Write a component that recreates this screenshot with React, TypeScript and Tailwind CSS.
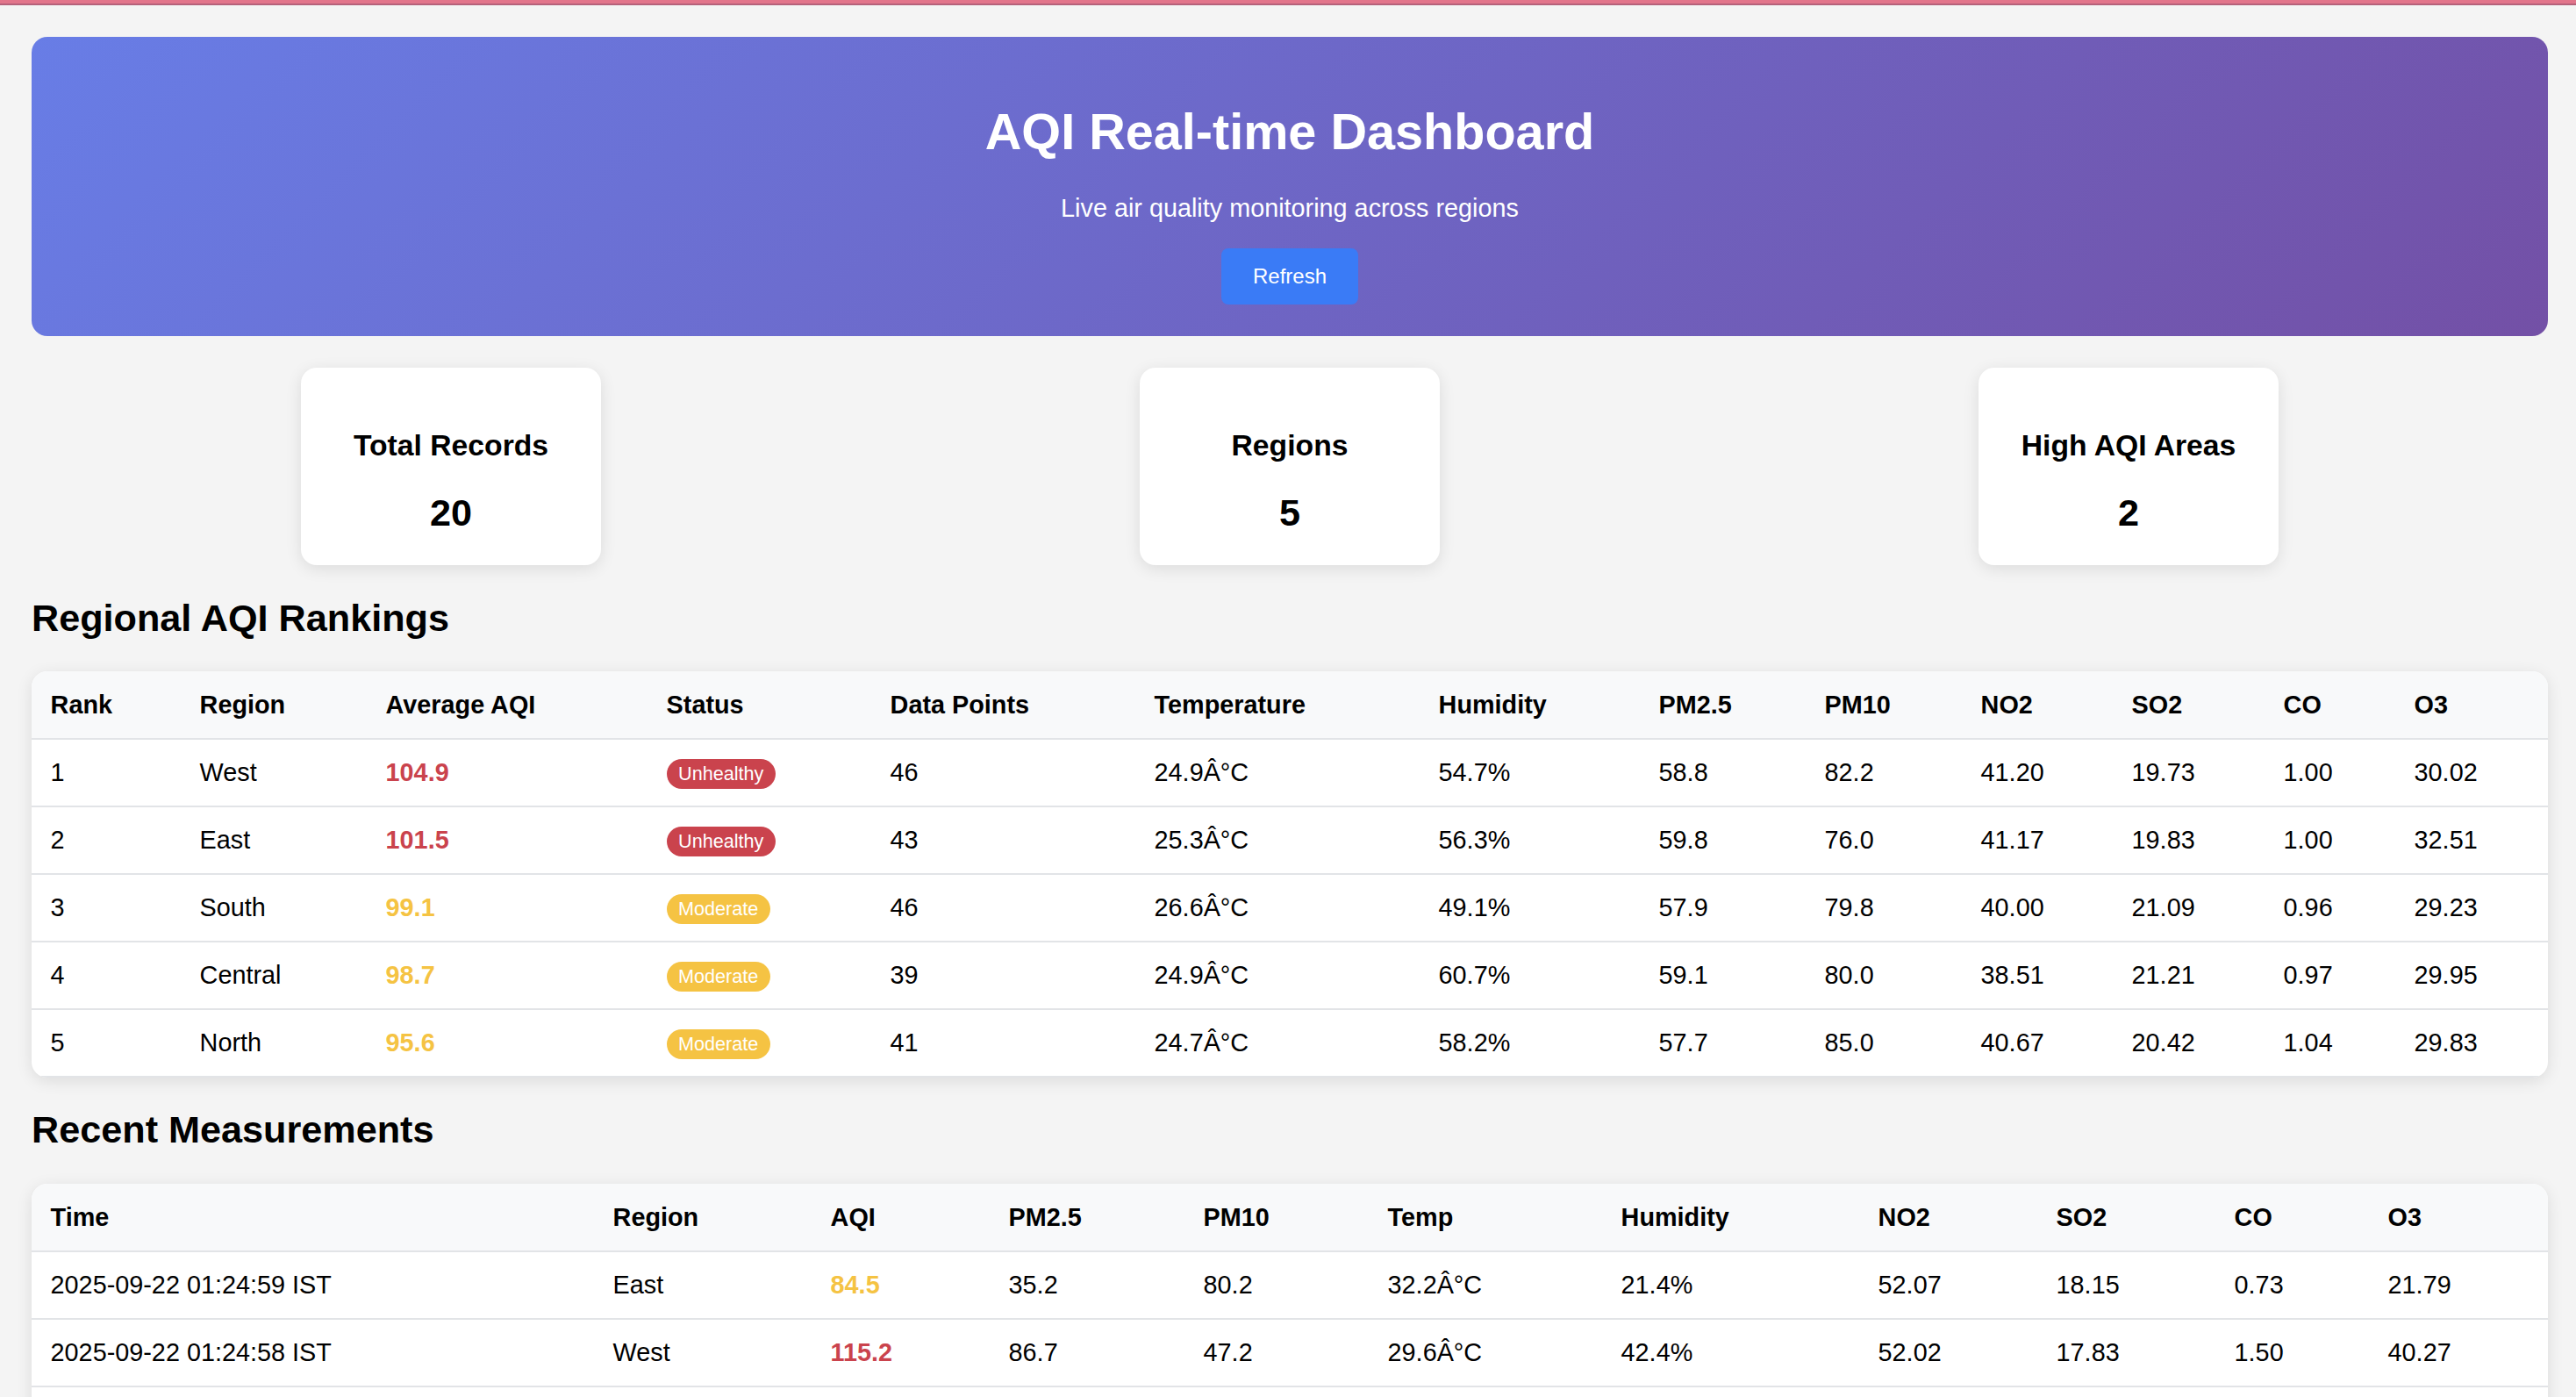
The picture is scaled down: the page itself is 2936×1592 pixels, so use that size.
import React from "react";

type Ranking = {
  rank: number;
  region: string;
  aqi: string;
  status: "Unhealthy" | "Moderate";
  points: number;
  temp: string;
  humidity: string;
  pm25: string;
  pm10: string;
  no2: string;
  so2: string;
  co: string;
  o3: string;
};

const rankings: Ranking[] = [
  { rank: 1, region: "West", aqi: "104.9", status: "Unhealthy", points: 46, temp: "24.9Â°C", humidity: "54.7%", pm25: "58.8", pm10: "82.2", no2: "41.20", so2: "19.73", co: "1.00", o3: "30.02" },
  { rank: 2, region: "East", aqi: "101.5", status: "Unhealthy", points: 43, temp: "25.3Â°C", humidity: "56.3%", pm25: "59.8", pm10: "76.0", no2: "41.17", so2: "19.83", co: "1.00", o3: "32.51" },
  { rank: 3, region: "South", aqi: "99.1", status: "Moderate", points: 46, temp: "26.6Â°C", humidity: "49.1%", pm25: "57.9", pm10: "79.8", no2: "40.00", so2: "21.09", co: "0.96", o3: "29.23" },
  { rank: 4, region: "Central", aqi: "98.7", status: "Moderate", points: 39, temp: "24.9Â°C", humidity: "60.7%", pm25: "59.1", pm10: "80.0", no2: "38.51", so2: "21.21", co: "0.97", o3: "29.95" },
  { rank: 5, region: "North", aqi: "95.6", status: "Moderate", points: 41, temp: "24.7Â°C", humidity: "58.2%", pm25: "57.7", pm10: "85.0", no2: "40.67", so2: "20.42", co: "1.04", o3: "29.83" },
];

const recent = [
  ["2025-09-22 01:24:59 IST", "East", "84.5", "35.2", "80.2", "32.2Â°C", "21.4%", "52.07", "18.15", "0.73", "21.79"],
  ["2025-09-22 01:24:58 IST", "West", "115.2", "86.7", "47.2", "29.6Â°C", "42.4%", "52.02", "17.83", "1.50", "40.27"],
  ["2025-09-22 01:24:57 IST", "North", "97.3", "61.4", "88.1", "23.9Â°C", "63.0%", "39.85", "20.11", "1.02", "28.64"],
];

const rankCols = ["w-[170px]", "w-[212px]", "w-[320px]", "w-[255px]", "w-[301px]", "w-[324px]", "w-[251px]", "w-[189px]", "w-[178px]", "w-[172px]", "w-[173px]", "w-[149px]", "w-[174px]"];
const recentCols = ["w-[641px]", "w-[248px]", "w-[203px]", "w-[222px]", "w-[210px]", "w-[266px]", "w-[293px]", "w-[203px]", "w-[203px]", "w-[175px]", "w-[204px]"];

const thClass =
  "h-[77px] border-b-2 border-[#e2e4e7] bg-[#f8f9fa] px-[21.6px] py-0 text-left align-middle text-[28.8px] font-bold leading-[33px]";
const tdClass =
  "h-[77px] border-b-2 border-[#e2e4e7] px-[21.6px] py-0 text-left align-middle text-[28.8px] leading-[33px]";

function aqiColor(value: string) {
  return parseFloat(value) > 100 ? "text-[#ca434d]" : "text-[#f5c343]";
}

function StatusBadge({ status }: { status: string }) {
  const bg = status === "Unhealthy" ? "bg-[#ca434d]" : "bg-[#f5c343]";
  return (
    <span className={`inline-block rounded-full px-[13.5px] py-[5px] text-[21.6px] leading-[24px] text-white ${bg}`}>
      {status}
    </span>
  );
}

function StatCard({ label, value }: { label: string; value: string }) {
  return (
    <div className="flex w-[342px] flex-col items-center rounded-[18px] bg-white pb-[36px] pt-[69px] shadow-[0_4px_18px_rgba(0,0,0,0.1)]">
      <div className="text-[33.7px] font-bold leading-[38px]">{label}</div>
      <div className="mt-[34px] text-[43.2px] font-bold leading-[48px]">{value}</div>
    </div>
  );
}

export default function App() {
  return (
    <div className="min-h-screen w-full bg-[#f4f4f4] font-['Liberation_Sans',Arial,sans-serif] text-black">
      <div className="h-[4px] bg-[#e2758b]" />
      <div className="h-[2px] bg-[#b5617a]" />

      <div className="pl-[36px] pr-[32px] pt-[36px]">
        <header className="rounded-[18px] bg-[linear-gradient(135deg,#687de6_0%,#7350a6_100%)] p-[36px] text-center text-white">
          <h1 className="mb-[39px] mt-[40px] text-[57.6px] font-bold leading-[64px]">AQI Real-time Dashboard</h1>
          <p className="mb-[30px] text-[28.8px] leading-[32px]">Live air quality monitoring across regions</p>
          <button
            type="button"
            className="h-[64px] rounded-[8px] bg-[#3a7bf6] px-[36px] text-[24px] leading-[28px] text-white"
          >
            Refresh
          </button>
        </header>

        <div className="mt-[36px] flex justify-around">
          <StatCard label="Total Records" value="20" />
          <StatCard label="Regions" value="5" />
          <StatCard label="High AQI Areas" value="2" />
        </div>

        <h2 className="mb-[37px] mt-[36px] text-[43.2px] font-bold leading-[48px]">Regional AQI Rankings</h2>
        <div className="overflow-hidden rounded-[18px] bg-white shadow-[0_4px_18px_rgba(0,0,0,0.1)]">
          <table className="w-full table-fixed border-collapse">
            <colgroup>
              {rankCols.map((c, i) => (
                <col key={i} className={c} />
              ))}
            </colgroup>
            <thead>
              <tr>
                {["Rank", "Region", "Average AQI", "Status", "Data Points", "Temperature", "Humidity", "PM2.5", "PM10", "NO2", "SO2", "CO", "O3"].map((h) => (
                  <th key={h} className={thClass}>
                    {h}
                  </th>
                ))}
              </tr>
            </thead>
            <tbody>
              {rankings.map((r) => (
                <tr key={r.rank}>
                  <td className={tdClass}>{r.rank}</td>
                  <td className={tdClass}>{r.region}</td>
                  <td className={`${tdClass} font-bold ${aqiColor(r.aqi)}`}>{r.aqi}</td>
                  <td className={tdClass}>
                    <StatusBadge status={r.status} />
                  </td>
                  <td className={tdClass}>{r.points}</td>
                  <td className={tdClass}>{r.temp}</td>
                  <td className={tdClass}>{r.humidity}</td>
                  <td className={tdClass}>{r.pm25}</td>
                  <td className={tdClass}>{r.pm10}</td>
                  <td className={tdClass}>{r.no2}</td>
                  <td className={tdClass}>{r.so2}</td>
                  <td className={tdClass}>{r.co}</td>
                  <td className={tdClass}>{r.o3}</td>
                </tr>
              ))}
            </tbody>
          </table>
        </div>

        <h2 className="mb-[38px] mt-[35px] text-[43.2px] font-bold leading-[48px]">Recent Measurements</h2>
        <div className="mb-[36px] overflow-hidden rounded-[18px] bg-white shadow-[0_4px_18px_rgba(0,0,0,0.1)]">
          <table className="w-full table-fixed border-collapse">
            <colgroup>
              {recentCols.map((c, i) => (
                <col key={i} className={c} />
              ))}
            </colgroup>
            <thead>
              <tr>
                {["Time", "Region", "AQI", "PM2.5", "PM10", "Temp", "Humidity", "NO2", "SO2", "CO", "O3"].map((h) => (
                  <th key={h} className={thClass}>
                    {h}
                  </th>
                ))}
              </tr>
            </thead>
            <tbody>
              {recent.map((row) => (
                <tr key={row[0]}>
                  {row.map((cell, i) => (
                    <td key={i} className={i === 2 ? `${tdClass} font-bold ${aqiColor(cell)}` : tdClass}>
                      {cell}
                    </td>
                  ))}
                </tr>
              ))}
            </tbody>
          </table>
        </div>
      </div>
    </div>
  );
}
